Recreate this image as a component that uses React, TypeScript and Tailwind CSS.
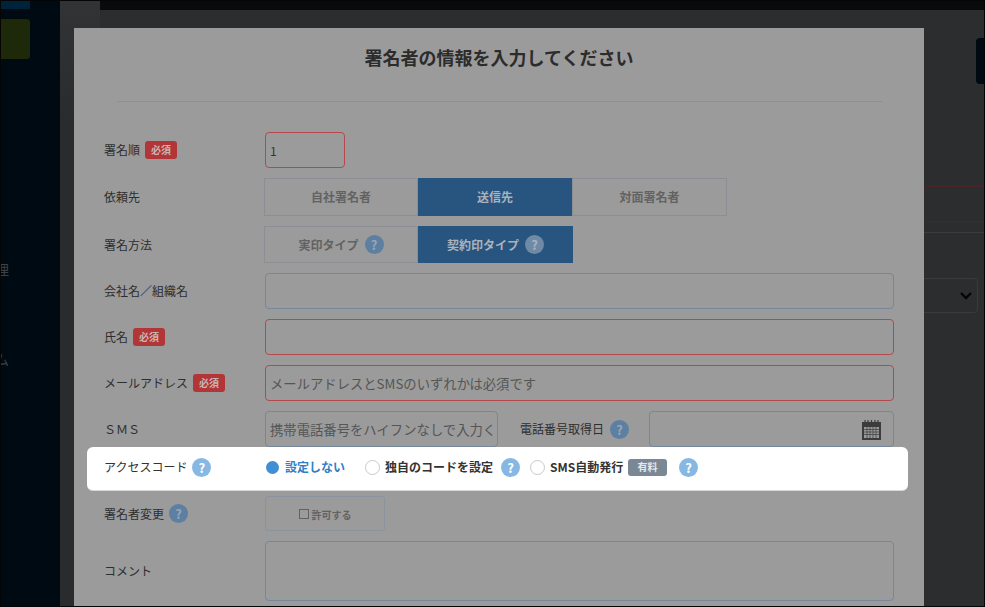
import React from "react";

const Help = ({ dim = false, faded = false }: { dim?: boolean; faded?: boolean }) => (
  <span
    className={`inline-flex h-[19px] w-[19px] shrink-0 items-center justify-center rounded-full text-[13px] font-bold leading-none ${
      faded ? "bg-[#6f8aa6] text-[#a6b2be]" : dim ? "bg-[#5c7fa2] text-[#96a6b6]" : "bg-[#87b8e3] text-white"
    }`}
  >
    ?
  </span>
);

const Required = () => (
  <span className="ml-[5px] inline-flex h-[18px] w-[32px] items-center justify-center rounded-[3px] bg-[#b23537] text-[10px] font-bold leading-none text-[#c9b4b4]">
    必須
  </span>
);

const Label = ({ children }: { children: React.ReactNode }) => (
  <div className="flex w-[161px] shrink-0 items-center text-[12px] text-[#2e2e2e]">{children}</div>
);

const Field = ({ red = false, placeholder = "", value }: { red?: boolean; placeholder?: string; value?: string }) => (
  <input
    readOnly
    value={value}
    placeholder={placeholder}
    className={`h-[36px] w-full rounded-[4px] border bg-transparent px-[4px] text-[12px] text-[#333] outline-none placeholder:text-[13.33px] placeholder:text-[#555] ${
      red ? "border-[#b54a4c]" : "border-[#76879a]"
    }`}
  />
);

const Tab = ({ active = false, w = "w-[155px]", children }: { active?: boolean; w?: string; children: React.ReactNode }) => (
  <div
    className={`flex items-center justify-center gap-[6px] text-[12px] font-bold ${w} ${
      active ? "bg-[#27557f] text-[#a9b3bd]" : "border border-[#8b8f93] text-[#626262]"
    }`}
  >
    {children}
  </div>
);

const Radio = ({ on = false }: { on?: boolean }) =>
  on ? (
    <span className="ml-px mr-[6px] h-[13px] w-[13px] shrink-0 rounded-full bg-[#3f8fd4]" />
  ) : (
    <span className="mr-[5px] h-[15px] w-[15px] shrink-0 rounded-full border border-[#c9c9c9] bg-white" />
  );

const Calendar = () => (
  <svg width="21" height="21" viewBox="0 0 21 21" className="shrink-0">
    <path d="M1 3h19v18H1z" fill="#3c3c3c" />
    <path d="M3 8h15v11H3z" fill="#9a9a9a" />
    <path d="M3 10.5h15M3 13h15M3 15.5h15M6 8v11M9 8v11M12 8v11M15 8v11" stroke="#3c3c3c" strokeWidth="0.7" />
    <path d="M4 1v3M7 1v3M10.500 1v3M14 1v3M17 1v3" stroke="#3c3c3c" strokeWidth="1.2" />
  </svg>
);

export default function App() {
  return (
    <div className="relative flex h-[607px] w-[985px] overflow-hidden border border-[#050505] bg-[#2c2d2f] font-['Noto_Sans_CJK_JP','Noto_Sans',sans-serif]">
      {/* page behind the overlay */}
      <aside className="flex w-[59px] shrink-0 flex-col bg-[#000a13]">
        <div className="h-[8px] w-[29px] bg-[#00233c]" />
        <div className="mt-[10px] h-[40px] w-[29px] rounded-r-[3px] bg-[#1d2908]" />
        <div className="mt-[203px] flex h-[14px] w-[8px] justify-end overflow-hidden text-[14px] leading-[14px] text-[#3b4045]">
          <span className="shrink-0">理</span>
        </div>
        <div className="mt-[76px] flex h-[14px] w-[8px] justify-end overflow-hidden text-[14px] leading-[14px] text-[#3b4045]">
          <span className="shrink-0">ム</span>
        </div>
      </aside>
      <div className="w-[40px] shrink-0 bg-gradient-to-b from-[#323334] to-[#2a2b2d] to-[20%]" />
      <main className="flex min-w-0 flex-1 flex-col">
        <div className="h-[9px] bg-[#090a0c]" />
        <div className="mt-[28px] ml-auto h-[46px] w-[8px] rounded-l-[4px] bg-[#000a13]" />
        <div className="mt-[102px] h-[36px] border-y border-[#4a2526]" />
        <div className="mt-[10px] h-px bg-[#3b3c3e]" />
        <div className="mt-[45px] mr-[6px] ml-auto flex h-[35px] w-[100px] items-center justify-end rounded-[4px] border border-[#3a3b3d] pr-[4px]">
          <svg width="14" height="10" viewBox="0 0 14 10">
            <path d="M2 2l5 5 5-5" fill="none" stroke="#050505" strokeWidth="2.400" />
          </svg>
        </div>
      </main>

      {/* modal */}
      <section className="absolute top-[27px] left-[73px] h-[600px] w-[850px] bg-[#9b9b9b] px-[30px]">
        <h1 className="flex h-[58px] items-center justify-center text-[18px] font-bold text-[#2c2c2c]">
          署名者の情報を入力してください
        </h1>
        <div className="mt-[15px] mr-[12px] ml-[13px] h-px bg-[#8c9095]" />

        <div className="mt-[30px] flex h-[36px]">
          <Label>
            署名順
            <Required />
          </Label>
          <div className="w-[80px]">
            <Field red value="1" />
          </div>
        </div>

        <div className="mt-[10px] flex h-[38px]">
          <Label>依頼先</Label>
          <div className="-ml-px flex">
            <Tab w="w-[154px]">自社署名者</Tab>
            <Tab active w="w-[154px]">送信先</Tab>
            <Tab>対面署名者</Tab>
          </div>
        </div>

        <div className="mt-[10px] flex h-[37px]">
          <Label>署名方法</Label>
          <div className="-ml-px flex">
            <Tab w="w-[154px]">
              実印タイプ
              <Help dim />
            </Tab>
            <Tab active>
              契約印タイプ
              <Help faded />
            </Tab>
          </div>
        </div>

        <div className="mt-[10px] flex h-[36px]">
          <Label>会社名／組織名</Label>
          <Field />
        </div>

        <div className="mt-[10px] flex h-[36px]">
          <Label>
            氏名
            <Required />
          </Label>
          <Field red />
        </div>

        <div className="mt-[10px] flex h-[36px]">
          <Label>
            メールアドレス
            <Required />
          </Label>
          <Field red placeholder="メールアドレスとSMSのいずれかは必須です" />
        </div>

        <div className="mt-[10px] flex h-[36px]">
          <Label>ＳＭＳ</Label>
          <div className="w-[233px] shrink-0">
            <Field placeholder="携帯電話番号をハイフンなしで入力ください" />
          </div>
          <div className="ml-[22px] flex w-[129px] shrink-0 items-center gap-[6px] text-[12px] text-[#2e2e2e]">
            電話番号取得日
            <Help dim />
          </div>
          <div className="flex h-[36px] flex-1 items-center justify-end rounded-[4px] border border-[#76879a] pr-[11px]">
            <Calendar />
          </div>
        </div>

        <div className="relative z-10 mr-[-14px] ml-[-17px] flex h-[44px] items-center rounded-[6px] border-b border-[#d8d8d8] bg-white pb-[3px] pl-[17px]">
          <div className="flex w-[161px] shrink-0 items-center gap-[5px] text-[12px] text-[#333]">
            アクセスコード
            <Help />
          </div>
          <div className="flex items-center text-[12px] font-bold text-[#333]">
            <Radio on />
            <span className="mr-[20px] text-[#2f80c9]">設定しない</span>
            <Radio />
            <span className="mr-[8px]">独自のコードを設定</span>
            <Help />
            <span className="w-[10px]" />
            <Radio />
            <span className="w-[72px] whitespace-nowrap">SMS自動発行</span>
            <span className="mr-[12px] ml-[6px] inline-flex h-[17px] w-[39px] items-center justify-center rounded-[3px] bg-[#7a8794] text-[10px] leading-none text-[#e6e9ec]">
              有料
            </span>
            <Help />
          </div>
        </div>

        <div className="mt-[5px] flex h-[35px]">
          <div className="flex w-[161px] shrink-0 items-center gap-[5px] text-[12px] text-[#2e2e2e]">
            署名者変更
            <Help dim />
          </div>
          <div className="flex h-[35px] w-[120px] items-center justify-center gap-[3px] rounded-[3px] border border-[#8a949e] pt-px text-[10px] font-bold text-[#626262]">
            <span className="h-[10px] w-[10px] border border-[#626262]" />
            許可する
          </div>
        </div>

        <div className="mt-[10px] flex h-[60px]">
          <Label>コメント</Label>
          <textarea readOnly className="h-[60px] w-full resize-none rounded-[4px] border border-[#76879a] bg-transparent outline-none" />
        </div>
      </section>
    </div>
  );
}
